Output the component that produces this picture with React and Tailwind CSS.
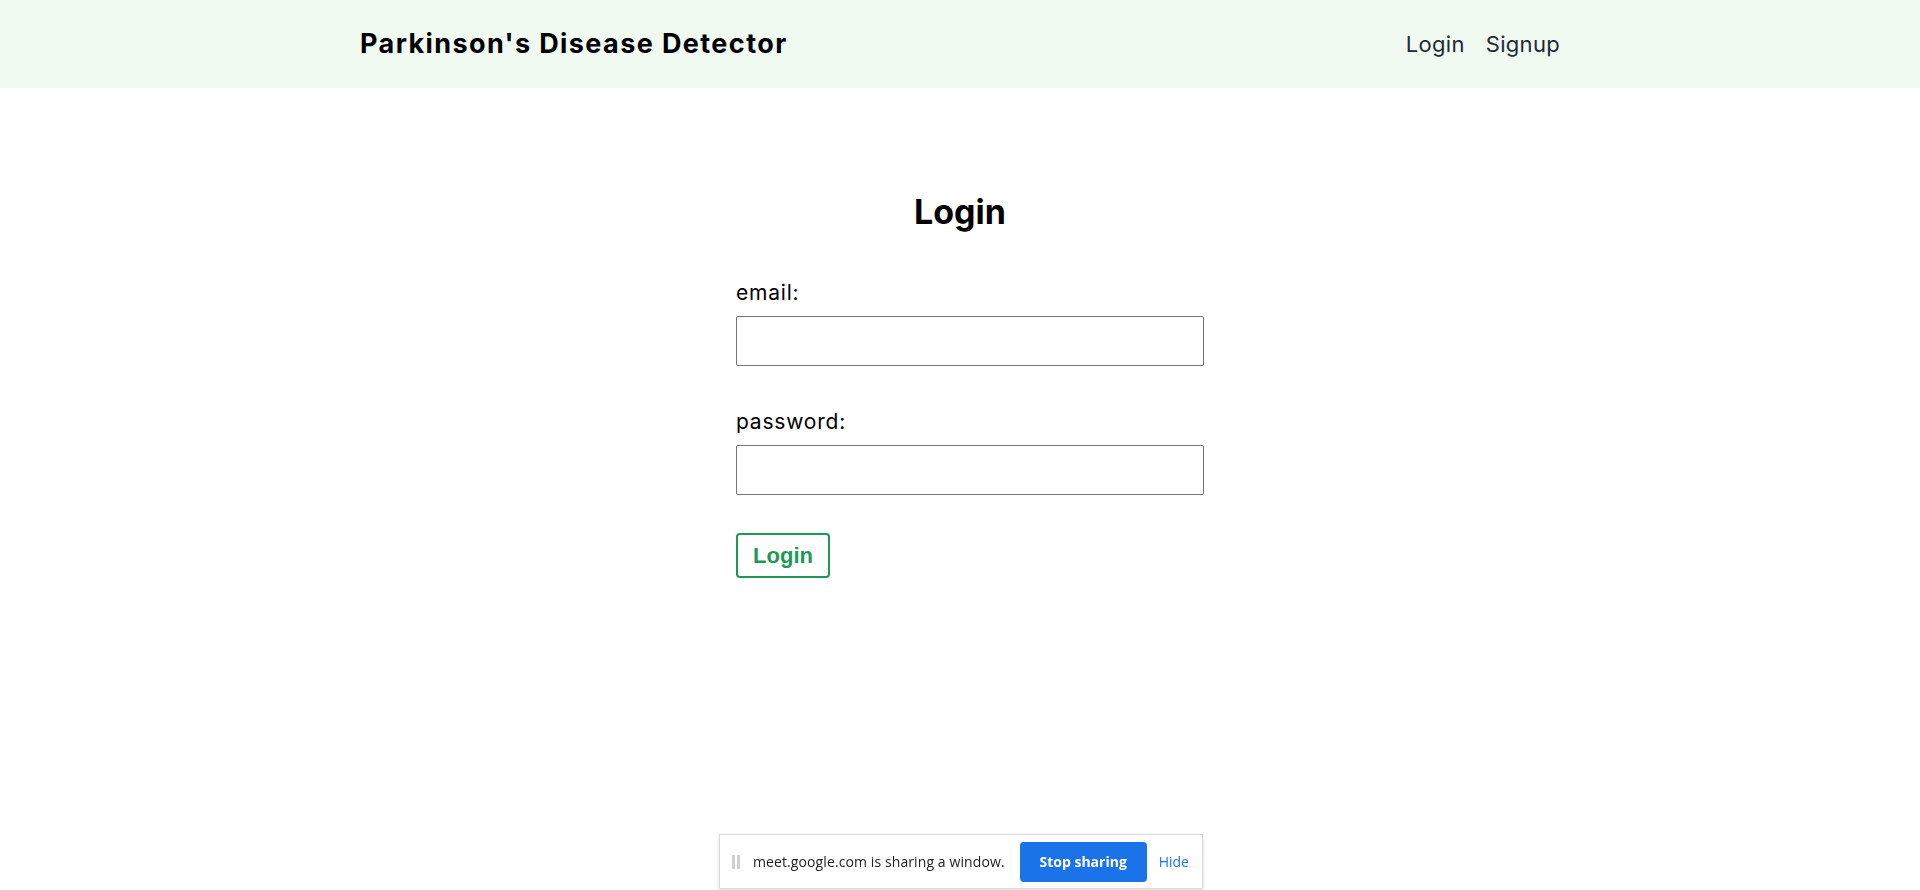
import React, { useState } from "react";

export default function App() {
  const [email, setEmail] = useState("");
  const [password, setPassword] = useState("");

  const handleSubmit = (e) => {
    e.preventDefault();
  };

  return (
    <div className="min-h-screen bg-white font-['Inter',sans-serif] text-black">
      <header className="bg-[#f0faf1] h-[88px]">
        <div className="mx-auto flex h-full w-[1200px] items-center justify-between">
          <h1 className="text-[27px] font-bold tracking-[1.4px]">Parkinson's Disease Detector</h1>
          <nav className="flex items-center gap-[21px] text-[22px] tracking-[0.3px] text-[#1f2937]">
            <a href="#">Login</a>
            <a href="#">Signup</a>
          </nav>
        </div>
      </header>

      <main className="flex flex-col items-center pt-[107px]">
        <h2 className="text-center text-[34px] font-bold leading-none">Login</h2>

        <form onSubmit={handleSubmit} className="w-[488px] pl-[20px]">
          <div className="mt-[49px]">
            <label className="block text-[21px] leading-[30px] tracking-[0.8px]">email:</label>
            <input
              type="email"
              value={email}
              onChange={(e) => setEmail(e.target.value)}
              className="mt-[8px] block h-[50px] w-full rounded-[2px] border border-[#767676] px-3 outline-none"
            />
          </div>

          <div className="mt-[41px]">
            <label className="block text-[21px] leading-[30px] tracking-[0.8px]">password:</label>
            <input
              type="password"
              value={password}
              onChange={(e) => setPassword(e.target.value)}
              className="mt-[8px] block h-[50px] w-full rounded-[2px] border border-[#767676] px-3 outline-none"
            />
          </div>

          <button
            type="submit"
            className="mt-[38px] h-[45px] w-[94px] rounded-[4px] border-2 border-[#1e9856] font-['Liberation_Sans',sans-serif] text-[22px] font-bold text-[#1e9856]"
          >
            Login
          </button>
        </form>
      </main>

      <div className="fixed bottom-[1px] left-[719px] flex h-[55px] w-[484px] items-center border border-[#dadada] bg-white shadow-[0_1px_3px_rgba(0,0,0,0.15)] font-['Open_Sans',sans-serif]">
        <div className="ml-[12px] flex gap-[2px]">
          <span className="block h-[14px] w-[3px] bg-[#d0d0d0]" />
          <span className="block h-[14px] w-[3px] bg-[#d0d0d0]" />
        </div>
        <span className="ml-[13px] text-[14px] tracking-[0.1px] text-[#202124]">meet.google.com is sharing a window.</span>
        <button className="ml-[15px] h-[40px] w-[127px] rounded-[4px] bg-[#1a73e8] text-[14px] font-bold text-white">
          Stop sharing
        </button>
        <button className="ml-[12px] text-[14px] text-[#1a73e8]">Hide</button>
      </div>
    </div>
  );
}
